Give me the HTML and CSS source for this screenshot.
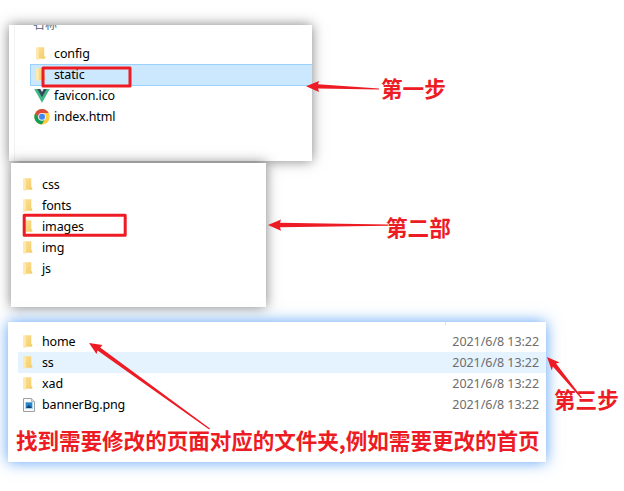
FILE: index.html
```
<!DOCTYPE html>
<html lang="zh-CN">
<head>
<meta charset="utf-8">
<title>文件夹</title>
<link rel="stylesheet" href="styles.css">
</head>
<body>
<svg width="0" height="0" class="defs">
  <defs>
    <linearGradient id="fold" x1="0" y1="0" x2="1" y2="1"><stop offset="0" stop-color="#fbdf94"/><stop offset="1" stop-color="#f3cd68"/></linearGradient>
    <symbol id="folder" viewBox="0 0 16 16">
      <path d="M3.500 1.300H10.300v8.700l1 .8v2H3.500z" fill="url(#fold)"/>
      <path d="M2 1.300l2.800.9v12L2 13.300z" fill="#ffe9ae"/>
    </symbol>
  </defs>
</svg>
<main class="page">
  <section class="panel panel-root">
    <div class="head">名称</div>
    <div class="row"><svg class="icon"><use href="#folder"/></svg><span>config</span></div>
    <div class="row selected"><svg class="icon"><use href="#folder"/></svg><span>static</span></div>
    <div class="row"><svg class="icon" viewBox="0 0 16 16"><path d="M.2 1h15.600L8 14.800z" fill="#41b883"/><path d="M3.300 1h9.400L8 9.300z" fill="#35495e"/><path d="M6.200 1h3.600L8 4z" fill="#dfeee8"/></svg><span>favicon.ico</span></div>
    <div class="row"><svg class="icon" viewBox="0 0 16 16"><circle cx="8" cy="7.800" r="7.700" fill="#ffcd40"/><path d="M1.330 3.950A7.700 7.700 0 0 1 14.670 3.950H8L4.750 9.700z" fill="#db4c3f"/><path d="M1.330 3.950A7.700 7.700 0 0 0 7.700 15.500L11.200 9.700H4.750z" fill="#0f9d58"/><circle cx="8" cy="7.800" r="3.900" fill="#f1f1f1"/><circle cx="8" cy="7.800" r="3" fill="#4285f4"/></svg><span>index.html</span></div>
  </section>
  <section class="panel panel-static">
    <div class="row"><svg class="icon"><use href="#folder"/></svg><span>css</span></div>
    <div class="row"><svg class="icon"><use href="#folder"/></svg><span>fonts</span></div>
    <div class="row"><svg class="icon"><use href="#folder"/></svg><span>images</span></div>
    <div class="row"><svg class="icon"><use href="#folder"/></svg><span>img</span></div>
    <div class="row"><svg class="icon"><use href="#folder"/></svg><span>js</span></div>
  </section>
  <section class="panel panel-images">
    <div class="row"><svg class="icon"><use href="#folder"/></svg><span>home</span><time>2021/6/8 13:22</time></div>
    <div class="row hover"><svg class="icon"><use href="#folder"/></svg><span>ss</span><time>2021/6/8 13:22</time></div>
    <div class="row"><svg class="icon"><use href="#folder"/></svg><span>xad</span><time>2021/6/8 13:22</time></div>
    <div class="row"><svg class="icon" viewBox="0 0 16 16"><path d="M2.500 1.500h8l3 3v10h-11z" fill="#fafafa" stroke="#a0a0a0"/><path d="M10.500 1.500v3h3" fill="#ddd" stroke="#b5b5b5"/><path d="M4 5h8v7H4z" fill="#a5d7f5"/><path d="M5 5.500h6v5.500h-6z" fill="#2883c7"/><path d="M5 11l3-3 3 3z" fill="#123f70"/></svg><span>bannerBg.png</span><time>2021/6/8 13:22</time></div>
    <p class="note">找到需要修改的页面对应的文件夹,例如需要更改的首页</p>
  </section>
  <div class="mark step1">第一步</div>
  <div class="mark step2">第二部</div>
  <div class="mark step3">第三步</div>
  <svg class="overlay" viewBox="0 0 624 491">
    <g fill="none" stroke="#ed1c24" stroke-width="3" stroke-linejoin="round">
      <rect x="43" y="68" width="87" height="18"/>
      <rect x="24.200" y="215.200" width="101" height="20"/>
    </g>
    <g fill="#ed1c24">
      <path d="M306 86.200L319 81l-1 3.200L379 88.400v1.200L318 88.500l1 3.500z"/>
      <path d="M268 225L281 219.500l-1 3.200L388 224.500v1.300L280 227.300l1 3.500z"/>
      <path d="M89 343L102.500 345l-2.300 2.500L210 428.500l-.8 1L97.500 350.500l-1 3.500z"/>
      <path d="M547 357L559.500 362.500l-3.500 1L582 397.500l-1 .8L552.800 366.500l-1 4z"/>
    </g>
  </svg>
</main>
</body>
</html>
```
FILE: styles.css
```
body {
  margin: 0;
  background: #fff;
  font-family: "Noto Sans", "Noto Sans CJK SC", sans-serif;
  font-size: 12.5px;
  color: #000;
}
.defs { position: absolute; }
.page {
  position: relative;
  width: 624px;
  height: 491px;
  overflow: hidden;
  display: flex;
  flex-direction: column;
  align-items: flex-start;
  padding: 25px 0 0 8px;
  box-sizing: border-box;
}
.panel {
  box-sizing: border-box;
  flex: none;
  background: #fff;
  box-shadow: 0 0 12px rgba(0, 0, 0, .5);
}
.panel-root {
  width: 303px;
  height: 136px;
  margin-left: 1px;
  padding-left: 21px;
  background: linear-gradient(#f2f2f2, #f2f2f2) 5px 0 / 1px 100% no-repeat #fff;
}
.panel-static {
  position: relative;
  width: 255px;
  height: 144px;
  margin: 2px 0 0 3px;
  padding: 11px 0 0 7px;
}
.panel-images {
  position: relative;
  width: 538px;
  height: 140px;
  margin-top: 15px;
  padding: 9px 0 0 10px;
  background: linear-gradient(#e5e5e5, #e5e5e5) 437px 0 / 1px 3px no-repeat #fff;
  box-shadow: 0 0 14px rgba(60, 145, 245, .85);
}
.head {
  height: 18px;
  overflow: hidden;
  padding-left: 3px;
  color: #4c607a;
  font-size: 12px;
  line-height: 0;
}
.row {
  display: flex;
  align-items: center;
  height: 21px;
  box-sizing: border-box;
  padding-left: 3px;
  line-height: 21px;
}
.row span {
  margin-left: 5px;
  letter-spacing: -.12px;
}
.panel-root .row { padding-left: 4px; }
.panel-root .row span { margin-left: 4px; }
.icon { width: 16px; height: 16px; flex: none; }
.selected {
  height: 22px;
  margin-bottom: -1px;
  background: #cce8ff;
  box-shadow: inset 1px 1px #99d1ff, inset 0 -1px #99d1ff;
}
.selected span { position: relative; top: -1px; }
.hover { background: #e5f3ff; }
.row time {
  margin-left: auto;
  padding-right: 7px;
  color: #6d6d6d;
  letter-spacing: -.05px;
}
.note, .mark {
  margin: 0;
  color: #ed1c24;
  font-family: "Noto Sans CJK SC", sans-serif;
  font-weight: 700;
  font-size: 21.600px;
  line-height: 30px;
  white-space: nowrap;
}
.note {
  margin: 10px 0 0 -2px;
  letter-spacing: -.07px;
}
.mark { position: absolute; }
.step1 { left: 381px; top: 73px; }
.step2 { left: 386px; top: 212px; }
.step3 { left: 554px; top: 384px; }
.overlay {
  position: absolute;
  left: 0;
  top: 0;
  width: 624px;
  height: 491px;
}
```
